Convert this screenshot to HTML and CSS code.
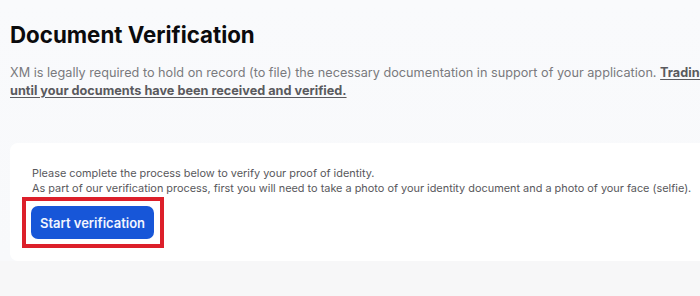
FILE: index.html
```html
<!DOCTYPE html>
<html>
<head>
<meta charset="utf-8">
<link rel="stylesheet" href="styles.css">
</head>
<body>
<main class="page">
  <h1 class="title">Document Verification</h1>
  <p class="intro">XM is legally required to hold on record (to file) the necessary documentation in support of your application. <a class="strong-link" href="#">Trading will be restricted<br>until your documents have been received and verified.</a></p>
  <section class="card">
    <p class="card-text">Please complete the process below to verify your proof of identity.<br>As part of our verification process, first you will need to take a photo of your identity document and a photo of your face (selfie).</p>
    <div class="highlight">
      <button class="btn" type="button">Start verification</button>
    </div>
  </section>
</main>
</body>
</html>
```
FILE: styles.css
```css
html, body {
  margin: 0;
  padding: 0;
}
body {
  width: 700px;
  height: 296px;
  overflow: hidden;
  background: #f7f7f8;
  font-family: Inter, "Noto Sans", sans-serif;
}
.page {
  width: 780px;
  padding: 20px 0 0 10px;
  background: linear-gradient(#f9fafc, #f8f9fb);
}
.title {
  margin: 0;
  font-size: 22.3px;
  font-weight: 700;
  line-height: 30px;
  color: #0b0b0d;
}
.intro {
  margin: 14px 0 0;
  font-size: 12.7px;
  line-height: 18px;
  color: #7a7a7e;
  white-space: nowrap;
}
.strong-link {
  color: #5a5a5e;
  font-weight: 700;
  text-decoration: underline;
  text-underline-offset: 2px;
}
.card {
  margin-top: 43px;
  background: #ffffff;
  border-radius: 8px;
  padding: 23px 0 13px 22px;
}
.card-text {
  margin: 0;
  font-size: 10.9px;
  line-height: 15px;
  color: #58585c;
}
.highlight {
  display: inline-block;
  margin: 1px 0 0 -10px;
  padding: 5px 6px 5px 5px;
  border: 4px solid #dc1f2a;
}
.btn {
  display: block;
  width: 123px;
  height: 33px;
  border: none;
  border-radius: 7px;
  background: #1756d8;
  color: #f2f5ff;
  font-family: Inter, "Noto Sans", sans-serif;
  font-size: 13px;
  font-weight: 600;
  cursor: pointer;
}
```
